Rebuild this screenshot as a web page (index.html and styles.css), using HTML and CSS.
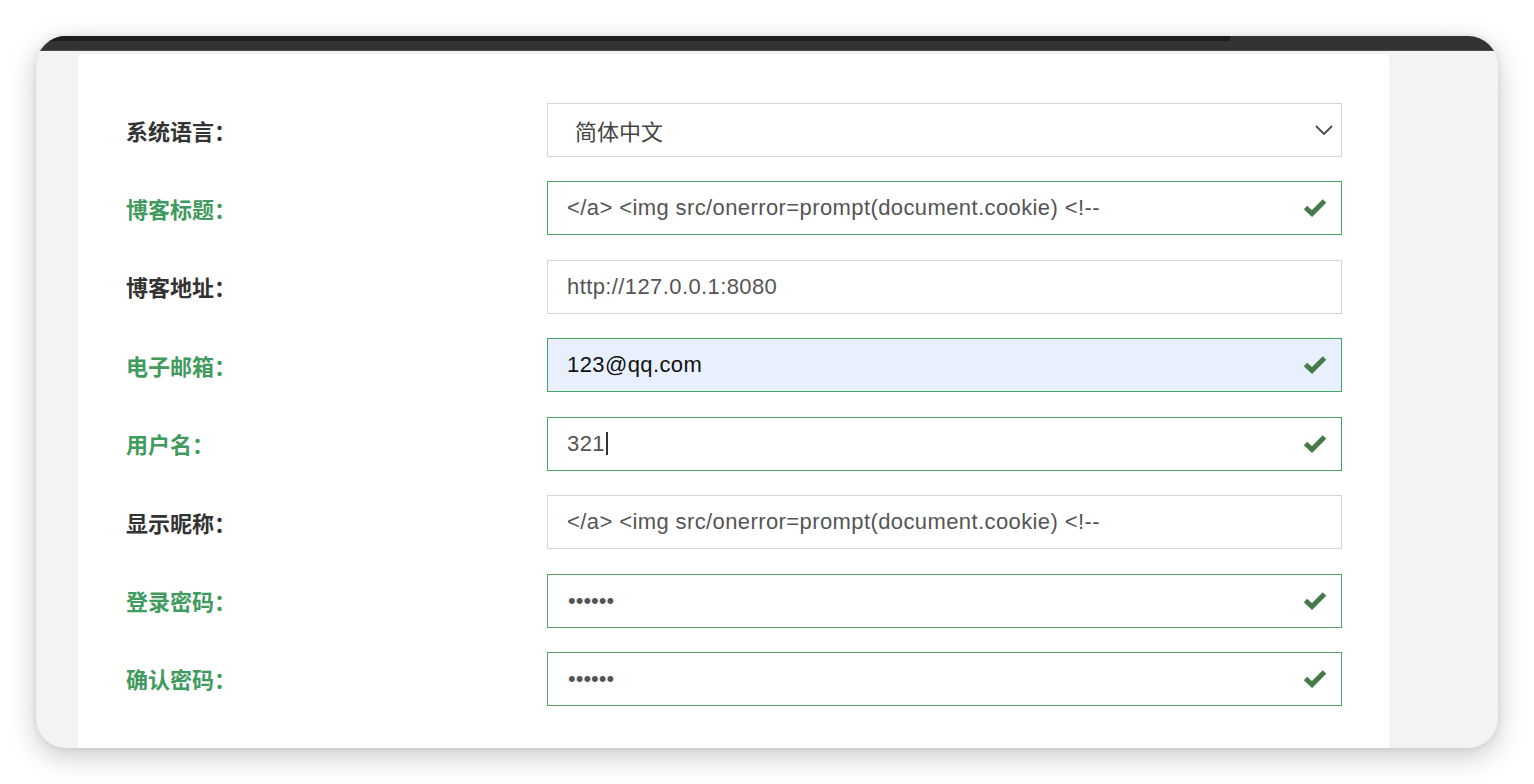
FILE: index.html
```html
<!DOCTYPE html>
<html lang="zh-CN">
<head>
<meta charset="utf-8">
<title>设置</title>
<link rel="stylesheet" href="styles.css">
</head>
<body>
<div class="window">
  <div class="titlebar"><div class="tabstrip"></div></div>
  <div class="content">
    <div class="panel">
      <form class="form">
        <div class="row">
          <div class="label">系统语言：</div>
          <div class="field select">
            <span class="value">简体中文</span>
            <svg class="chevron" width="18" height="10" viewBox="0 0 18 10"><polyline points="1,1 9,9 17,1" fill="none" stroke="#4a4a4a" stroke-width="1.8"/></svg>
          </div>
        </div>
        <div class="row ok">
          <div class="label">博客标题：</div>
          <div class="field">
            <span class="value">&lt;/a&gt; &lt;img src/onerror=prompt(document.cookie) &lt;!--</span>
            <svg class="check" width="24" height="20" viewBox="0 0 24 20"><polyline points="2.5,10.5 9,16.5 21.5,4" fill="none" stroke="#467a48" stroke-width="5"/></svg>
          </div>
        </div>
        <div class="row">
          <div class="label">博客地址：</div>
          <div class="field">
            <span class="value">http://127.0.0.1:8080</span>
          </div>
        </div>
        <div class="row ok">
          <div class="label">电子邮箱：</div>
          <div class="field autofill">
            <span class="value">123@qq.com</span>
            <svg class="check" width="24" height="20" viewBox="0 0 24 20"><polyline points="2.5,10.5 9,16.5 21.5,4" fill="none" stroke="#467a48" stroke-width="5"/></svg>
          </div>
        </div>
        <div class="row ok">
          <div class="label">用户名：</div>
          <div class="field">
            <span class="value">321<span class="caret"></span></span>
            <svg class="check" width="24" height="20" viewBox="0 0 24 20"><polyline points="2.5,10.5 9,16.5 21.5,4" fill="none" stroke="#467a48" stroke-width="5"/></svg>
          </div>
        </div>
        <div class="row">
          <div class="label">显示昵称：</div>
          <div class="field">
            <span class="value">&lt;/a&gt; &lt;img src/onerror=prompt(document.cookie) &lt;!--</span>
          </div>
        </div>
        <div class="row ok dim">
          <div class="label">登录密码：</div>
          <div class="field">
            <span class="value dots">••••••</span>
            <svg class="check" width="24" height="20" viewBox="0 0 24 20"><polyline points="2.5,10.5 9,16.5 21.5,4" fill="none" stroke="#467a48" stroke-width="5"/></svg>
          </div>
        </div>
        <div class="row ok dim">
          <div class="label">确认密码：</div>
          <div class="field">
            <span class="value dots">••••••</span>
            <svg class="check" width="24" height="20" viewBox="0 0 24 20"><polyline points="2.5,10.5 9,16.5 21.5,4" fill="none" stroke="#467a48" stroke-width="5"/></svg>
          </div>
        </div>
      </form>
    </div>
  </div>
</div>
</body>
</html>
```

FILE: styles.css
```css
html, body {
  margin: 0;
  padding: 0;
  background: #ffffff;
}

body {
  padding: 36px;
  width: 1534px;
  height: 784px;
  box-sizing: border-box;
  overflow: hidden;
  font-family: "Liberation Sans", "Noto Sans CJK SC", sans-serif;
}

.window {
  width: 1462px;
  height: 712px;
  border-radius: 30px;
  overflow: hidden;
  background: #f3f3f3;
  box-shadow: 0 8px 28px rgba(0, 0, 0, 0.22), 0 0 6px rgba(0, 0, 0, 0.08);
  display: flex;
  flex-direction: column;
}

.titlebar {
  height: 14px;
  background: #333333;
  border-bottom: 1px solid #4a4a4a;
  flex: none;
}

.tabstrip {
  width: 1194px;
  height: 5px;
  background: #1d1d1d;
}

.content {
  flex: 1;
  padding: 3px 0 0 42px;
  display: flex;
}

.panel {
  width: 1312px;
  background: #ffffff;
  border-radius: 4px 4px 0 0;
  box-shadow: 1px 0 0 #ececec;
}

.form {
  display: flex;
  flex-direction: column;
  gap: 24.43px;
  padding: 49px 48px 0 48px;
}

.row {
  display: flex;
  align-items: center;
  height: 54px;
}

.label {
  width: 421px;
  flex: none;
  font-family: "Noto Sans CJK SC", sans-serif;
  font-weight: 700;
  font-size: 22px;
  color: #333333;
  margin-top: -1px;
}

.row.ok .label {
  color: #3f9b5e;
}

.field {
  width: 795px;
  height: 54px;
  box-sizing: border-box;
  border: 1px solid #d6d6da;
  background: #ffffff;
  display: flex;
  align-items: center;
  padding: 0 14px 0 19px;
  font-size: 22px;
  letter-spacing: 0.4px;
  color: #555555;
}

.row.ok .field {
  border-color: #45a463;
}

.row.dim .field {
  border-color: #5a9b6a;
}

.field.autofill {
  background: #e8f0fe;
  color: #111111;
}

.value {
  flex: 1;
  white-space: nowrap;
  display: flex;
  align-items: center;
}

.select {
  padding-left: 27px;
}

.select .value {
  font-family: "Noto Sans CJK SC", sans-serif;
  font-size: 22px;
  letter-spacing: 0;
  color: #444444;
}

.chevron {
  flex: none;
  margin-right: -6px;
}

.check {
  flex: none;
  margin-top: -2px;
}

.caret {
  display: inline-block;
  width: 2px;
  height: 23px;
  background: #333333;
  margin-left: 1px;
}

.dots {
  font-size: 22px;
  letter-spacing: 0;
  color: #555555;
  padding-left: 1px;
}
```
